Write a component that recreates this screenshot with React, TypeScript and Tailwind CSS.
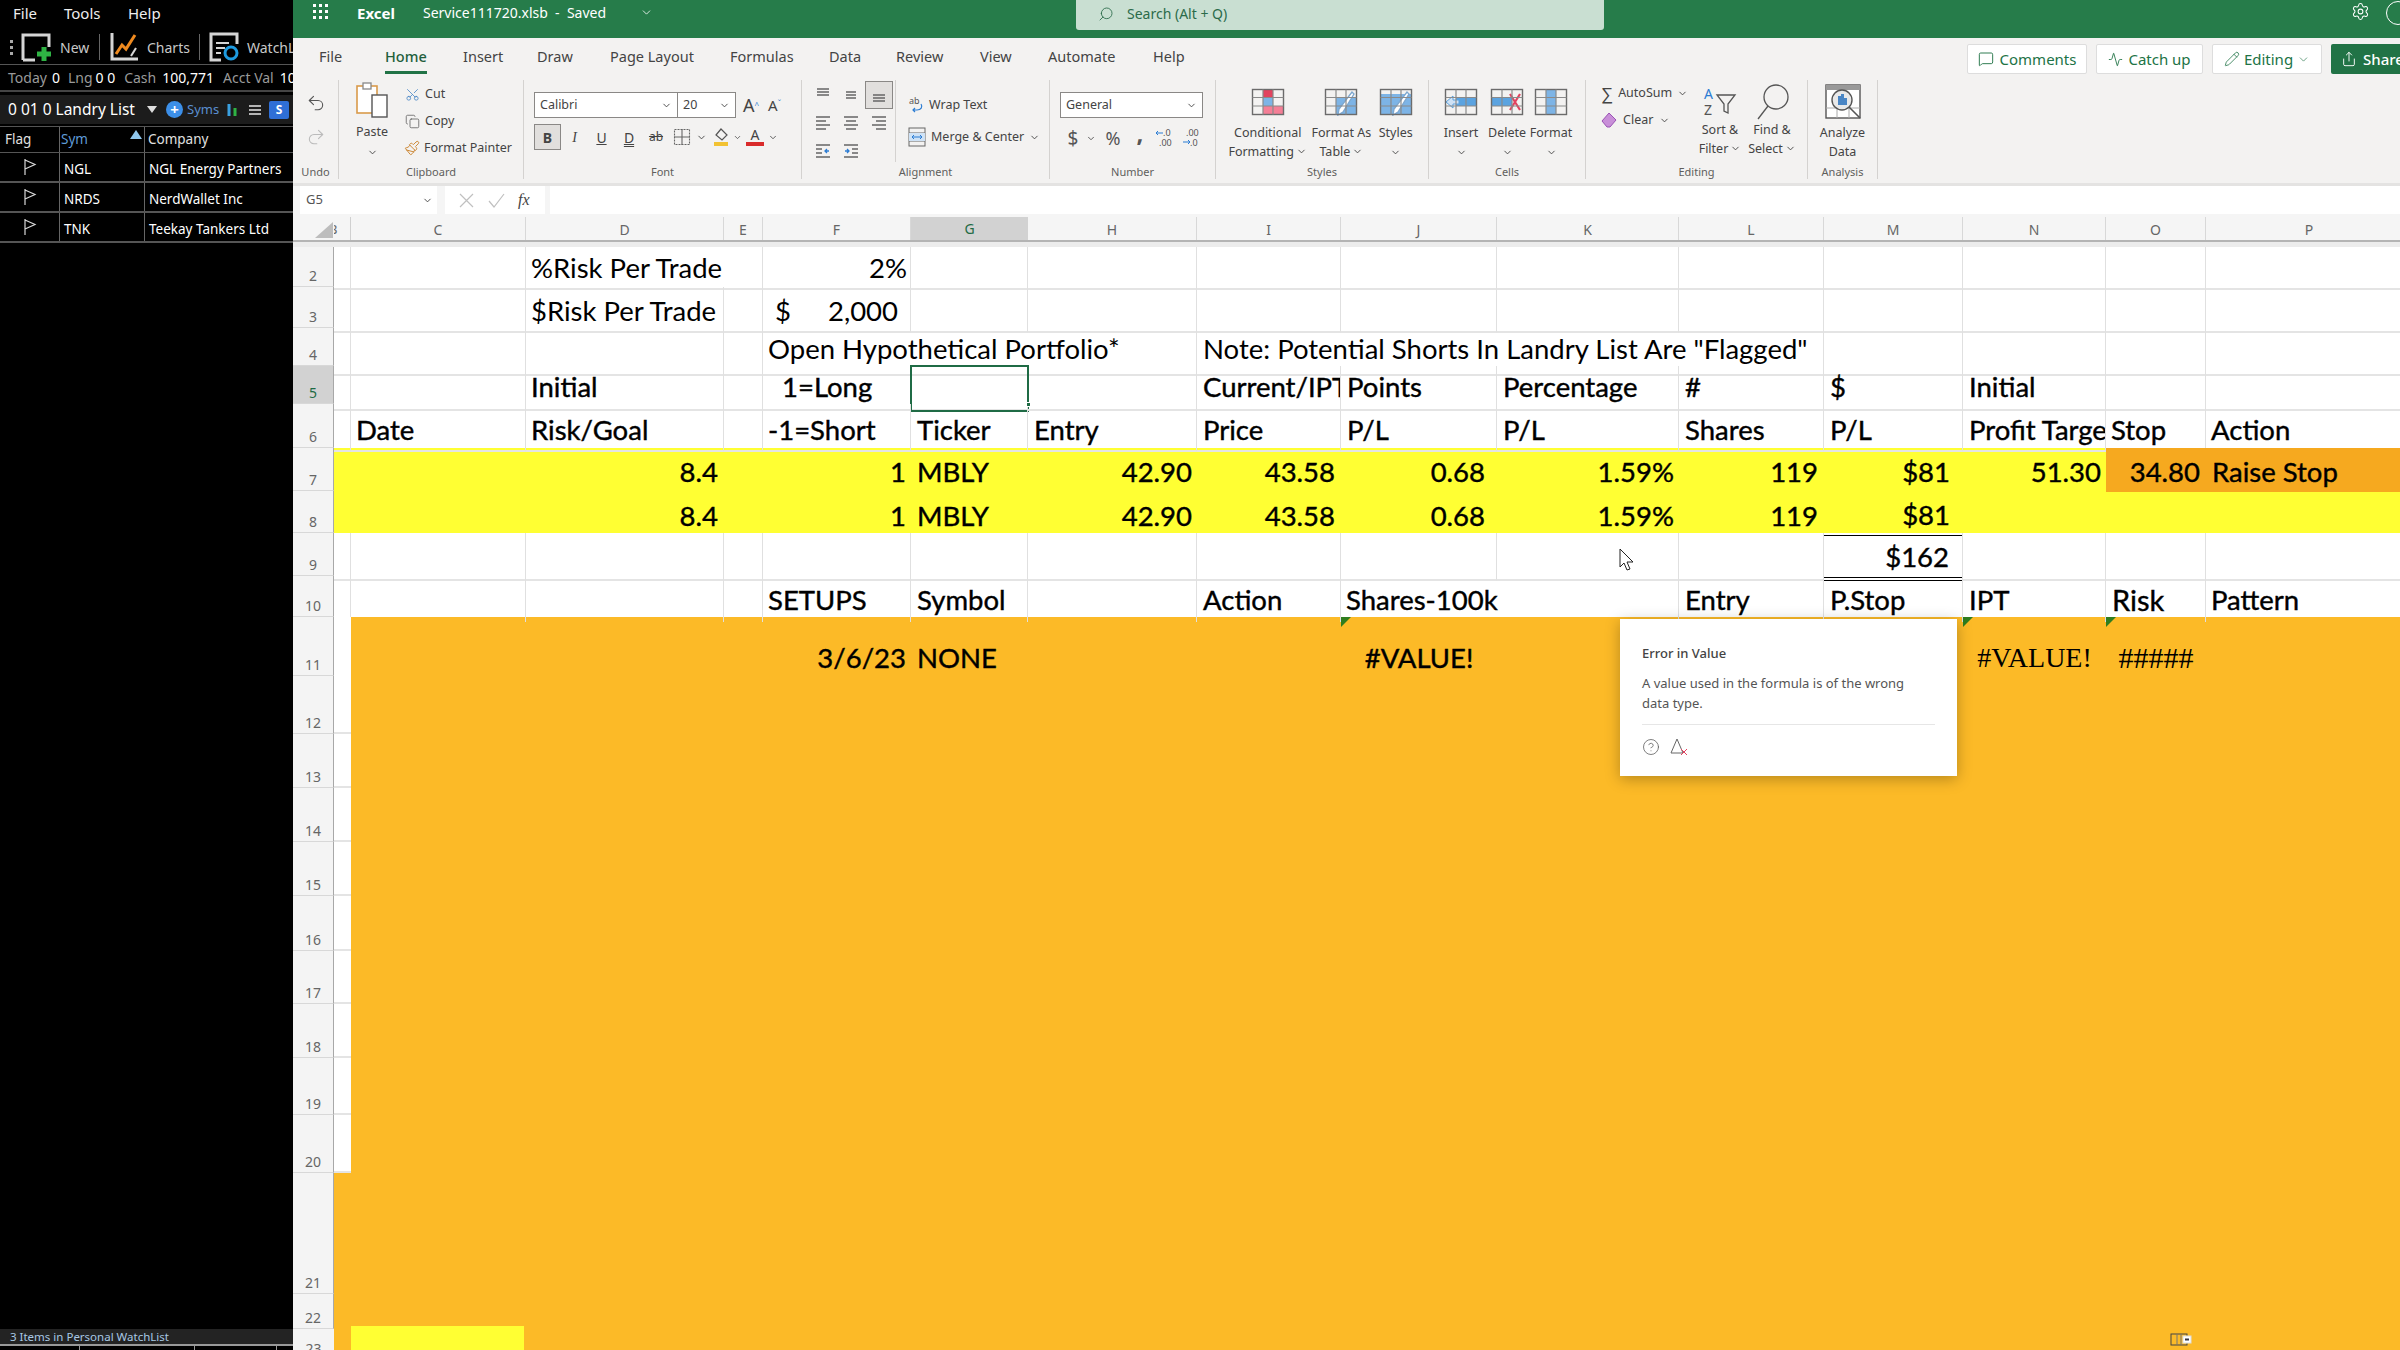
import { ReactNode } from "react";
import {
  Activity,
  ChevronDown,
  Copy,
  HelpCircle,
  MessageSquare,
  Paintbrush,
  Pencil,
  Redo2,
  Scissors,
  Search,
  Settings,
  Share,
  Undo2,
} from "lucide-react";

const GRID_COLS =
  "grid grid-cols-[17px_175px_198px_39px_148px_117px_169px_144px_156px_182px_145px_139px_143px_100px_207px]";

type Cell = {
  c: number;
  t?: ReactNode;
  cls?: string;
};

type RowDef = {
  n: number;
  h: string;
  pad?: string;
  fill?: string;
  plain?: boolean;
  whiteB?: boolean;
  cells?: Cell[];
};

const right = "justify-end pr-[6px]";
const stroke = "[-webkit-text-stroke:0.4px_black]";

const rows: RowDef[] = [
  {
    n: 2,
    h: "h-[40px]",
    pad: "pt-0",
    cells: [
      { c: 2, t: "%Risk Per Trade", cls: "col-span-2 pl-[5px]" },
      { c: 4, t: "2%", cls: "justify-end pr-[3px]" },
    ],
  },
  {
    n: 3,
    h: "h-[41px]",
    pad: "pt-[3px]",
    cells: [
      { c: 2, t: "$Risk Per Trade", cls: "pl-[5px]" },
      {
        c: 4,
        t: (
          <span className="flex w-full justify-between">
            <span>$</span>
            <span>2,000</span>
          </span>
        ),
        cls: "pl-[12px] pr-[12px]",
      },
    ],
  },
  {
    n: 4,
    h: "h-[38px]",
    pad: "pb-[5px]",
    cells: [
      { c: 4, t: "Open Hypothetical Portfolio*", cls: "col-span-3 pl-[5px]" },
      { c: 7, t: 'Note: Potential Shorts In Landry List Are "Flagged"', cls: "col-span-4 pl-[6px]" },
    ],
  },
  {
    n: 5,
    h: "h-[38px]",
    pad: "pb-[2px]",
    cells: [
      { c: 2, t: "Initial", cls: `pl-[5px] ${stroke}` },
      { c: 4, t: "1=Long", cls: `pl-[19px] ${stroke}` },
      { c: 5, cls: "outline-2 -outline-offset-1 outline-[#1f6b45]" },
      { c: 7, t: "Current/IPT", cls: `pl-[6px] overflow-hidden ${stroke}` },
      { c: 8, t: "Points", cls: `pl-[6px] ${stroke}` },
      { c: 9, t: "Percentage", cls: `pl-[6px] ${stroke}` },
      { c: 10, t: "#", cls: `pl-[6px] ${stroke}` },
      { c: 11, t: "$", cls: `pl-[6px] ${stroke}` },
      { c: 12, t: "Initial", cls: `pl-[6px] ${stroke}` },
    ],
  },
  {
    n: 6,
    h: "h-[44px]",
    pad: "pt-[5px]",
    cells: [
      { c: 1, t: "Date", cls: `pl-[5px] ${stroke}` },
      { c: 2, t: "Risk/Goal", cls: `pl-[5px] ${stroke}` },
      { c: 4, t: "-1=Short", cls: `pl-[5px] ${stroke}` },
      { c: 5, t: "Ticker", cls: `pl-[6px] ${stroke}` },
      { c: 6, t: "Entry", cls: `pl-[6px] ${stroke}` },
      { c: 7, t: "Price", cls: `pl-[6px] ${stroke}` },
      { c: 8, t: "P/L", cls: `pl-[6px] ${stroke}` },
      { c: 9, t: "P/L", cls: `pl-[6px] ${stroke}` },
      { c: 10, t: "Shares", cls: `pl-[6px] ${stroke}` },
      { c: 11, t: "P/L", cls: `pl-[6px] ${stroke}` },
      { c: 12, t: "Profit Target", cls: `pl-[6px] overflow-hidden ${stroke}` },
      { c: 13, t: "Stop", cls: `pl-[5px] ${stroke}` },
      { c: 14, t: "Action", cls: `pl-[5px] ${stroke}` },
    ],
  },
  {
    n: 7,
    h: "h-[43px]",
    pad: "pt-[3px]",
    plain: true,
    fill: "bg-[#ffff33]",
    cells: [
      { c: 2, t: "8.4", cls: `${right} ${stroke}` },
      { c: 4, t: "1", cls: `justify-end pr-[5px] ${stroke}` },
      { c: 5, t: "MBLY", cls: `pl-[6px] ${stroke}` },
      { c: 6, t: "42.90", cls: `justify-end pr-[5px] ${stroke}` },
      { c: 7, t: "43.58", cls: `${right} ${stroke}` },
      { c: 8, t: "0.68", cls: `justify-end pr-[12px] ${stroke}` },
      { c: 9, t: "1.59%", cls: `justify-end pr-[5px] ${stroke}` },
      { c: 10, t: "119", cls: `${right} ${stroke}` },
      { c: 11, t: "$81", cls: `justify-end pr-[13px] ${stroke}` },
      { c: 12, t: "51.30", cls: `justify-end pr-[5px] ${stroke}` },
      { c: 13, t: "34.80", cls: `bg-[#f6a91f] justify-end pr-[6px] ${stroke}` },
      { c: 14, t: "Raise Stop", cls: `bg-[#f6a91f] pl-[6px] ${stroke}` },
    ],
  },
  {
    n: 8,
    h: "h-[42px]",
    pad: "pt-[3px]",
    plain: true,
    fill: "bg-[#ffff33]",
    cells: [
      { c: 2, t: "8.4", cls: `${right} ${stroke}` },
      { c: 4, t: "1", cls: `justify-end pr-[5px] ${stroke}` },
      { c: 5, t: "MBLY", cls: `pl-[6px] ${stroke}` },
      { c: 6, t: "42.90", cls: `justify-end pr-[5px] ${stroke}` },
      { c: 7, t: "43.58", cls: `${right} ${stroke}` },
      { c: 8, t: "0.68", cls: `justify-end pr-[12px] ${stroke}` },
      { c: 9, t: "1.59%", cls: `justify-end pr-[5px] ${stroke}` },
      { c: 10, t: "119", cls: `${right} ${stroke}` },
      { c: 11, t: "$81", cls: `justify-end pr-[13px] border-b border-black ${stroke}` },
    ],
  },
  {
    n: 9,
    h: "h-[43px]",
    pad: "pt-[3px]",
    cells: [
      { c: 11, t: "$162", cls: `justify-end pr-[13px] !border-b-4 border-double !border-b-black ${stroke}` },
    ],
  },
  {
    n: 10,
    h: "h-[41px]",
    pad: "pt-[2px]",
    cells: [
      { c: 4, t: "SETUPS", cls: `pl-[5px] ${stroke}` },
      { c: 5, t: "Symbol", cls: `pl-[6px] ${stroke}` },
      { c: 7, t: "Action", cls: `pl-[6px] ${stroke}` },
      { c: 8, t: "Shares-100k", cls: `col-span-2 pl-[5px] ${stroke}` },
      { c: 10, t: "Entry", cls: `pl-[6px] ${stroke}` },
      { c: 11, t: "P.Stop", cls: `pl-[6px] ${stroke}` },
      { c: 12, t: "IPT", cls: `pl-[6px] ${stroke}` },
      { c: 13, t: "Risk", cls: `pl-[6px] text-[29px] ${stroke}` },
      { c: 14, t: "Pattern", cls: `pl-[5px] ${stroke}` },
    ],
  },
  {
    n: 11,
    h: "h-[59px]",
    pad: "pt-[18px]",
    plain: true,
    whiteB: true,
    cells: [
      { c: 4, t: "3/6/23", cls: `justify-end pr-[5px] ${stroke}` },
      { c: 5, t: "NONE", cls: `pl-[6px] ${stroke}` },
      { c: 8, t: "#VALUE!", cls: `justify-center ${stroke}` },
      { c: 12, t: "#VALUE!", cls: "justify-center font-['Liberation_Serif',serif] text-[28px]" },
      { c: 13, t: "#####", cls: "justify-center font-['Liberation_Serif',serif] text-[30px]" },
    ],
  },
  { n: 12, h: "h-[58px]", plain: true, whiteB: true },
  { n: 13, h: "h-[54px]", plain: true, whiteB: true },
  { n: 14, h: "h-[54px]", plain: true, whiteB: true },
  { n: 15, h: "h-[54px]", plain: true, whiteB: true },
  { n: 16, h: "h-[55px]", plain: true, whiteB: true },
  { n: 17, h: "h-[53px]", plain: true, whiteB: true },
  { n: 18, h: "h-[54px]", plain: true, whiteB: true },
  { n: 19, h: "h-[57px]", plain: true, whiteB: true },
  { n: 20, h: "h-[58px]", plain: true, whiteB: true },
  { n: 21, h: "h-[121px]", plain: true },
  { n: 22, h: "h-[35px]", plain: true },
];

function SheetRow({ row }: { row: RowDef }) {
  const cells = row.cells ?? [];
  const isOrange = row.n >= 11;
  const out: ReactNode[] = [];
  let skip = 0;
  for (let c = 0; c < 15; c++) {
    if (skip > 0) {
      skip--;
      continue;
    }
    const cell = cells.find((x) => x.c === c);
    const cls = cell?.cls ?? "";
    if (cls.includes("col-span-2")) skip = 1;
    if (cls.includes("col-span-3")) skip = 2;
    if (cls.includes("col-span-4")) skip = 3;
    let lines = "";
    if (row.n === 10) lines = "border-r border-r-[#e0e0e0]";
    else if (!row.plain) lines = "border-r border-b-2 border-r-[#e0e0e0] border-b-[#e4e4e4]";
    const whiteB = c === 0 && row.whiteB ? "bg-white border-b-2 border-b-[#e4e4e4]" : "";
    const corner = row.n === 11 && (c === 8 || c === 12 || c === 13);
    out.push(
      <div
        key={c}
        className={`relative flex items-center whitespace-nowrap min-w-0 ${row.pad ?? ""} ${lines} ${whiteB} ${cls}`}
      >
        {corner && (
          <svg className="absolute left-0 top-0" width="10" height="10" viewBox="0 0 10 10">
            <polygon points="0,0 10,0 0,10" fill="#2e7d1f" />
          </svg>
        )}
        {cell?.t}
      </div>
    );
  }
  return (
    <div className={`flex shrink-0 ${row.h}`}>
      <div
        className={`w-[41px] shrink-0 flex items-end justify-center border-b border-r border-b-[#d8d8d8] border-r-[#a8a8a8] text-[14px] font-['Noto_Sans',sans-serif] ${
          row.n === 5 ? "bg-[#d2d2d2] text-[#1f6b45]" : "bg-[#f4f4f4] text-[#666]"
        }`}
      >
        {row.n}
      </div>
      <div className={`flex-1 text-[27.5px] text-black ${GRID_COLS} ${row.fill ?? (isOrange ? "bg-[#fcba27]" : "bg-white")}`}>
        {out}
      </div>
    </div>
  );
}

function ColHeader() {
  const names = ["C", "D", "E", "F", "G", "H", "I", "J", "K", "L", "M", "N", "O", "P"];
  return (
    <div className="flex h-[25px] shrink-0 overflow-hidden border-b-2 border-[#b4b4b4] bg-[#f5f5f5] text-[14px] text-[#666]">
      <div className="w-[41px] shrink-0 flex items-end justify-end pb-[2px] pr-[1px]">
        <svg width="18" height="16" viewBox="0 0 18 16">
          <polygon points="18,0 18,16 0,16" fill="#bdbdbd" />
        </svg>
      </div>
      <div className={`flex-1 ${GRID_COLS}`}>
        <div className="flex items-center overflow-hidden border-r border-[#d0d0d0] pl-[1px] text-[13px]">
          <span className="-ml-[6px]">B</span>
        </div>
        {names.map((n) =>
          n === "G" ? (
            <div key={n} className="flex items-center justify-center bg-[#d2d2d2] text-[#1f6b45] border-b-2 border-[#1f6b45] h-[25px]">
              {n}
            </div>
          ) : (
            <div key={n} className="flex items-center justify-center border-r border-[#d8d8d8]">
              {n}
            </div>
          )
        )}
      </div>
    </div>
  );
}

function Waffle() {
  const dots = [0, 1, 2, 3, 4, 5, 6, 7, 8];
  return (
    <div className="grid grid-cols-3 gap-[3px] w-[15px]">
      {dots.map((d) => (
        <span key={d} className="size-[3px] bg-white" />
      ))}
    </div>
  );
}

function FlagIcon() {
  return (
    <svg width="14" height="18" viewBox="0 0 14 18" fill="none" stroke="#d8d8d8" strokeWidth="1.2">
      <path d="M2 1v16M2 2l10 4.5L2 11" />
    </svg>
  );
}

function LeftPanel() {
  const items = [
    ["NGL", "NGL Energy Partners"],
    ["NRDS", "NerdWallet Inc"],
    ["TNK", "Teekay Tankers Ltd"],
  ];
  return (
    <div className="w-[293px] shrink-0 h-full bg-black flex flex-col font-['Noto_Sans',sans-serif] text-[#e0e0e0] overflow-hidden relative">
      <div className="h-[30px] flex items-start pt-[2px] pl-[13px] text-[15px] text-[#eeeeee]">
        <span className="w-[51px]">File</span>
        <span className="w-[64px]">Tools</span>
        <span>Help</span>
      </div>
      <div className="h-[35px] flex items-center border-b border-[#555] text-[14px] text-[#c8c8c8] whitespace-nowrap">
        <div className="w-[21px] shrink-0 flex flex-col items-center gap-[3px] pl-[1px]">
          <span className="size-[3px] bg-[#aaa]" />
          <span className="size-[3px] bg-[#aaa]" />
          <span className="size-[3px] bg-[#aaa]" />
        </div>
        <svg className="shrink-0" width="32" height="30" viewBox="0 0 32 30" fill="none">
          <path d="M2 28V3h26v12" stroke="#d5d5d5" strokeWidth="3" />
          <path d="M2 28h12" stroke="#d5d5d5" strokeWidth="3" />
          <path d="M23 15v14M16 22h14" stroke="#2fb344" strokeWidth="5" />
        </svg>
        <span className="ml-[7px] w-[39px] shrink-0">New</span>
        <span className="w-px h-[26px] bg-[#666] shrink-0" />
        <svg className="ml-[9px] shrink-0" width="32" height="30" viewBox="0 0 32 30" fill="none">
          <path d="M3 1v26h26" stroke="#d5d5d5" strokeWidth="3" />
          <path d="M7 22l6-9 4 4 9-14" stroke="#ef8a1f" strokeWidth="3" />
          <path d="M22 24l5-8" stroke="#d5d5d5" strokeWidth="2" />
        </svg>
        <span className="ml-[6px] w-[52px] shrink-0">Charts</span>
        <span className="w-px h-[26px] bg-[#666] shrink-0" />
        <svg className="ml-[9px] shrink-0" width="32" height="30" viewBox="0 0 32 30" fill="none">
          <path d="M12 28H2V2h26v10" stroke="#d5d5d5" strokeWidth="3" />
          <path d="M7 11h13M7 16h9M7 21h5" stroke="#d5d5d5" strokeWidth="2" />
          <circle cx="22" cy="21" r="6" stroke="#1e9be0" strokeWidth="3" />
        </svg>
        <span className="ml-[6px] shrink-0">WatchList</span>
      </div>
      <div className="h-[27px] flex items-center pl-[8px] whitespace-nowrap text-[14px] border-b-2 border-[#444] text-[#9a9a9a]">
        <span>Today</span>
        <span className="ml-[5px] text-white">0</span>
        <span className="ml-[8px]">Lng</span>
        <span className="ml-[3px] text-white">0 0</span>
        <span className="ml-[9px]">Cash</span>
        <span className="ml-[6px] text-white">100,771</span>
        <span className="ml-[9px]">Acct Val</span>
        <span className="ml-[6px] text-white">100,771</span>
      </div>
      <div className="mt-[3px] h-[29px] flex items-center pl-[8px] bg-[#1c1c1c] whitespace-nowrap">
        <span className="text-[15.5px] text-white w-[139px] shrink-0">0 01 0 Landry List</span>
        <svg width="10" height="7" viewBox="0 0 10 7" className="shrink-0">
          <polygon points="0,0 10,0 5,7" fill="#ddd" />
        </svg>
        <span className="ml-[9px] flex size-[17px] shrink-0 items-center justify-center rounded-full bg-[#3c8fe8] text-[15px] leading-none font-bold text-white">+</span>
        <span className="ml-[4px] text-[13px] text-[#5a8fd0]">Syms</span>
        <svg className="ml-[7px] shrink-0" width="12" height="16" viewBox="0 0 12 16">
          <path d="M3 2v12" stroke="#3aa0e0" strokeWidth="3" />
          <path d="M9 6v8" stroke="#2fb344" strokeWidth="3" />
        </svg>
        <svg className="ml-[10px] shrink-0" width="14" height="14" viewBox="0 0 14 14" stroke="#b5b5b5" strokeWidth="2">
          <path d="M1 3h12M1 7h12M1 11h12" />
        </svg>
        <span className="ml-[7px] flex h-[18px] w-[20px] shrink-0 items-center justify-center rounded-[2px] bg-[#2f6fd6] text-[12px] font-bold text-white">S</span>
      </div>
      <div className="mt-[2px] h-[27px] flex items-center border-y border-[#555] text-[13.5px] relative">
        <span className="w-[60px] pl-[5px] border-r border-[#666] h-full flex items-center">Flag</span>
        <span className="w-[85px] pl-[1px] border-r border-[#666] h-full flex items-center text-[#5f9bd8] relative">
          Sym
          <svg className="absolute right-[2px] top-[3px]" width="12" height="9" viewBox="0 0 12 9">
            <polygon points="6,0 12,9 0,9" fill="#8fc7ee" />
          </svg>
        </span>
        <span className="pl-[3px]">Company</span>
      </div>
      {items.map((it) => (
        <div key={it[0]} className="h-[30px] flex items-center border-b-2 border-[#555] text-[13.5px] text-white">
          <span className="w-[60px] h-full flex items-center justify-center border-r border-[#666]">
            <FlagIcon />
          </span>
          <span className="w-[85px] h-full flex items-center pl-[4px] pt-[5px] border-r border-[#666]">{it[0]}</span>
          <span className="pl-[4px] pt-[5px] whitespace-nowrap">{it[1]}</span>
        </div>
      ))}
      <div className="flex-1" />
      <div className="h-[15px] bg-[#232323] pl-[10px] flex items-center text-[11.5px] text-[#a8c8e4]">
        3 Items in Personal WatchList
      </div>
      <div className="h-[6px] flex border-t-2 border-[#999]">
        <span className="w-[80px] border-r border-[#999]" />
        <span className="w-[115px] border-r border-[#999]" />
        <span className="w-[82px] border-r border-[#999]" />
      </div>
    </div>
  );
}

function TopBar() {
  return (
    <div className="h-[38px] shrink-0 bg-[#267c4a] flex items-start text-white text-[14px] whitespace-nowrap">
      <div className="w-[64px] shrink-0 pl-[20px] pt-[4px]">
        <Waffle />
      </div>
      <span className="pt-[2px] w-[66px] shrink-0 font-bold text-[15px]">Excel</span>
      <span className="pt-[2px] w-[217px] shrink-0">Service111720.xlsb&nbsp;&nbsp;-&nbsp;&nbsp;Saved</span>
      <ChevronDown className="mt-[6px] shrink-0" size={13} strokeWidth={1.5} />
      <div className="ml-[423px] h-[30px] w-[528px] shrink-0 bg-[#c9dfd2] rounded-b-[3px] flex items-center pl-[22px] pb-[3px] text-[#2b6b4a]">
        <Search size={16} strokeWidth={1.3} className="-scale-x-100" />
        <span className="ml-[13px]">Search (Alt + Q)</span>
      </div>
      <Settings className="ml-[747px] mt-[2px] shrink-0" size={19} strokeWidth={1.3} />
      <span className="ml-[16px] mt-[1px] size-[24px] shrink-0 rounded-full border border-white" />
    </div>
  );
}

function Tabs() {
  return (
    <div className="h-[42px] shrink-0 bg-[#f3f2f1] flex items-start pl-[26px] pt-[8px] text-[14.5px] text-[#444] whitespace-nowrap">
      <span className="w-[66px]">File</span>
      <span className="w-[78px] text-[#1f5f3c]">
        <span className="inline-block border-b-[3px] border-[#217346] pb-[3px] font-medium">Home</span>
      </span>
      <span className="w-[74px]">Insert</span>
      <span className="w-[73px]">Draw</span>
      <span className="w-[120px]">Page Layout</span>
      <span className="w-[99px]">Formulas</span>
      <span className="w-[67px]">Data</span>
      <span className="w-[84px]">Review</span>
      <span className="w-[68px]">View</span>
      <span className="w-[105px]">Automate</span>
      <span>Help</span>
      <div className="ml-auto -mt-[2px] flex gap-[9px] text-[#217346] text-[15px]">
        <span className="h-[30px] w-[120px] flex items-center justify-center gap-[6px] bg-white border border-[#dddddd] rounded-[2px]">
          <MessageSquare size={16} strokeWidth={1.4} />
          Comments
        </span>
        <span className="h-[30px] w-[107px] flex items-center justify-center gap-[5px] bg-white border border-[#dddddd] rounded-[2px]">
          <Activity size={15} strokeWidth={1.4} />
          Catch up
        </span>
        <span className="h-[30px] w-[110px] flex items-center justify-center gap-[4px] bg-white border border-[#dddddd] rounded-[2px]">
          <Pencil size={16} strokeWidth={1.2} />
          Editing
          <ChevronDown size={13} strokeWidth={1.2} />
        </span>
        <span className="h-[30px] w-[69px] flex items-center pl-[10px] gap-[6px] bg-[#217346] text-white rounded-l-[2px] font-medium overflow-hidden whitespace-nowrap">
          <Share size={16} strokeWidth={1.4} className="shrink-0" />
          Share
        </span>
      </div>
    </div>
  );
}

function Group({ w, label, children }: { w: string; label: string; children: ReactNode }) {
  return (
    <div className={`${w} shrink-0 h-[99px] flex flex-col border-r border-[#d4d2d0]`}>
      <div className="h-[85px] flex">{children}</div>
      <div className="h-[14px] flex items-center justify-center text-[11px] text-[#605e5c]">{label}</div>
    </div>
  );
}

function Chev({ cls = "" }: { cls?: string }) {
  return <ChevronDown className={cls} size={11} strokeWidth={2} color="#444" />;
}

function Lines({ v }: { v: number }) {
  // alignment glyphs: 0-2 vertical top/mid/bottom, 3-5 left/center/right, 6-7 indent
  const sets: string[] = [
    "M3 3h12M3 6h12M3 9h12",
    "M4 6h10M4 9h10M4 12h10",
    "M3 9h12M3 12h12M3 15h12",
    "M2 3h14M2 7h10M2 11h14M2 15h10",
    "M2 3h14M4 7h10M2 11h14M4 15h10",
    "M2 3h14M6 7h10M2 11h14M6 15h10",
    "M2 3h14M2 7h6M2 11h6M2 15h14",
    "M2 3h14M10 7h6M10 11h6M2 15h14",
  ];
  return (
    <svg width="18" height="18" viewBox="0 0 18 18" fill="none" stroke="#666" strokeWidth="1.3">
      <path d={sets[v]} />
      {v === 6 && <path d="M15 9h-4M13 7l-2 2 2 2" stroke="#2b7cd3" />}
      {v === 7 && <path d="M3 9h4M5 7l2 2-2 2" stroke="#2b7cd3" />}
    </svg>
  );
}

function TableGlyph({ children }: { children?: ReactNode }) {
  return (
    <svg width="34" height="28" viewBox="0 0 34 28" fill="none">
      {children}
      <rect x="1.5" y="1.5" width="31" height="25" stroke="#6b6b6b" strokeWidth="1.4" />
      <path d="M12 1.5v25M22 1.5v25M1.5 9.5h31M1.5 18h31" stroke="#8a8a8a" strokeWidth="1.2" />
    </svg>
  );
}

function Brush() {
  return <path d="M30 6L19 24l-5 3 1-6L28 4z" fill="#fff" stroke="#7da7cf" strokeWidth="1.4" />;
}

function ColumnBtn({
  icon,
  a,
  b,
  w,
  noChev,
  bChev,
  tight,
}: {
  icon: ReactNode;
  a: string;
  b?: string;
  w: string;
  noChev?: boolean;
  bChev?: boolean;
  tight?: boolean;
}) {
  return (
    <div className={`${w} flex flex-col items-center pt-[8px] text-[12.5px] leading-[19px] text-[#444] whitespace-nowrap`}>
      <div className="h-[28px] flex items-center">{icon}</div>
      <span className={tight ? "mt-[4px]" : "mt-[7px]"}>{a}</span>
      {b ? (
        <span className="flex items-center gap-[2px]">
          {b}
          {bChev && <Chev />}
        </span>
      ) : (
        !noChev && <Chev cls="mt-[5px]" />
      )}
    </div>
  );
}

function Ribbon() {
  return (
    <div className="h-[103px] shrink-0 bg-[#f3f2f1] flex text-[12.5px] text-[#444] font-['Noto_Sans',sans-serif]">
      <Group w="w-[46px]" label="Undo">
        <div className="w-full flex flex-col items-center pt-[13px] gap-[14px]">
          <Undo2 size={20} strokeWidth={1.3} color="#555" />
          <Redo2 size={20} strokeWidth={1.3} color="#bbb" />
        </div>
      </Group>
      <Group w="w-[185px]" label="Clipboard">
        <div className="w-[66px] flex flex-col items-center pt-[2px]">
          <svg width="34" height="36" viewBox="0 0 34 36" fill="none">
            <rect x="2" y="4" width="20" height="27" fill="#fff" stroke="#d99a4a" strokeWidth="1.6" />
            <rect x="8" y="1" width="8" height="6" fill="#fff" stroke="#888" strokeWidth="1.3" />
            <rect x="17" y="13" width="15" height="22" fill="#fff" stroke="#555" strokeWidth="1.4" />
          </svg>
          <span className="mt-[5px]">Paste</span>
          <Chev cls="mt-[5px]" />
        </div>
        <div className="flex flex-col pt-[4px] gap-[7px]">
          <div className="h-[20px] flex items-center gap-[5px]">
            <Scissors size={15} strokeWidth={1.3} color="#4a86c5" className="-rotate-90" />
            Cut
          </div>
          <div className="h-[20px] flex items-center gap-[5px]">
            <Copy size={15} strokeWidth={1.2} color="#555" />
            Copy
          </div>
          <div className="h-[20px] flex items-center gap-[4px] -ml-[1px] whitespace-nowrap">
            <Paintbrush size={16} strokeWidth={1.4} color="#c9822c" />
            Format Painter
          </div>
        </div>
      </Group>
      <Group w="w-[278px]" label="Font">
        <div className="pl-[10px] pt-[12px] flex flex-col gap-[6px] w-full">
          <div className="flex items-center h-[26px]">
            <div className="w-[144px] h-full bg-white border border-[#8a8886] flex items-center justify-between px-[5px]">
              Calibri
              <Chev />
            </div>
            <div className="w-[58px] h-full bg-white border border-l-0 border-[#8a8886] flex items-center justify-between px-[5px]">
              20
              <Chev />
            </div>
            <span className="ml-[7px] text-[18px] leading-none">A<sup className="text-[8px] text-[#2b7cd3]">^</sup></span>
            <span className="ml-[9px] text-[15px] leading-none">A<sup className="text-[8px] text-[#2b7cd3]">ˇ</sup></span>
          </div>
          <div className="flex items-center h-[26px] text-[14px]">
            <span className="w-[27px] h-full bg-[#e1dfdd] border border-[#8a8886] flex items-center justify-center font-bold">B</span>
            <span className="w-[27px] text-center italic font-['Liberation_Serif',serif]">I</span>
            <span className="w-[27px] text-center underline">U</span>
            <span className="w-[28px] text-center underline decoration-double">D</span>
            <span className="w-[26px] text-center line-through text-[12px]">ab</span>
            <span className="w-[26px] flex justify-center">
              <svg width="18" height="18" viewBox="0 0 18 18" fill="none" stroke="#666" strokeWidth="1.1">
                <rect x="1.5" y="1.5" width="15" height="15" strokeDasharray="2 1" />
                <path d="M9 1v16M1 9h16" />
              </svg>
            </span>
            <span className="w-[13px] flex justify-center"><Chev /></span>
            <span className="w-[25px] flex justify-center">
              <svg width="18" height="20" viewBox="0 0 18 20" fill="none">
                <path d="M9 2l6 6-5 5-6-5z" stroke="#555" strokeWidth="1.2" />
                <rect x="2" y="15" width="14" height="4" fill="#f2c232" />
              </svg>
            </span>
            <span className="w-[9px] flex justify-center"><Chev /></span>
            <span className="w-[26px] flex flex-col items-center leading-[14px]">
              A
              <span className="h-[4px] w-[18px] bg-[#d92b2b]" />
            </span>
            <span className="w-[10px] flex justify-center"><Chev /></span>
          </div>
        </div>
      </Group>
      <Group w="w-[248px]" label="Alignment">
        <div className="w-[94px] pl-[7px] pt-[1px] grid grid-cols-[28px_28px_28px] grid-rows-[28px_28px_28px] border-r border-[#d4d2d0] h-[82px]">
          {[0, 1, 2, 3, 4, 5, 6, 7].map((v) => (
            <div
              key={v}
              className={`flex items-center justify-center ${v === 2 ? "bg-[#e1dfdd] border border-[#8a8886]" : ""}`}
            >
              <Lines v={v} />
            </div>
          ))}
        </div>
        <div className="pl-[12px] pt-[15px] flex flex-col gap-[12px] whitespace-nowrap">
          <div className="h-[20px] flex items-center gap-[5px]">
            <svg width="16" height="18" viewBox="0 0 16 18" fill="none">
              <text x="1" y="8" fontSize="9" fill="#555">ab</text>
              <path d="M13 8c2 3 0 6-4 6H5m2-2l-2 2 2 2" stroke="#2b7cd3" strokeWidth="1.2" />
            </svg>
            Wrap Text
          </div>
          <div className="h-[20px] flex items-center gap-[5px]">
            <svg width="18" height="20" viewBox="0 0 18 20" fill="none">
              <rect x="1" y="1" width="16" height="18" stroke="#666" />
              <path d="M1 6h16M1 14h16" stroke="#666" />
              <rect x="1" y="6" width="16" height="8" fill="#cfe2f5" />
              <path d="M4 10h10M6 8l-2 2 2 2M12 8l2 2-2 2" stroke="#2b7cd3" />
            </svg>
            Merge &amp; Center
            <Chev />
          </div>
        </div>
      </Group>
      <Group w="w-[166px]" label="Number">
        <div className="pl-[10px] pt-[12px] flex flex-col gap-[3px] w-full">
          <div className="w-[143px] h-[26px] bg-white border border-[#8a8886] flex items-center justify-between px-[5px]">
            General
            <Chev />
          </div>
          <div className="flex items-center h-[34px] text-[#555]">
            <span className="w-[26px] text-center text-[19px]">$</span>
            <span className="w-[10px] flex justify-center"><Chev /></span>
            <span className="w-[34px] text-center text-[18px]">%</span>
            <span className="w-[20px] text-center text-[24px] font-bold leading-none -mt-[10px]">,</span>
            <span className="w-[29px] flex justify-center">
              <svg width="20" height="20" viewBox="0 0 20 20">
                <text x="8" y="8" fontSize="9" fill="#555">.0</text>
                <text x="4" y="18" fontSize="9" fill="#555">.00</text>
                <path d="M8 5H1m2-2L1 5l2 2" stroke="#2b7cd3" fill="none" />
              </svg>
            </span>
            <span className="w-[26px] flex justify-center">
              <svg width="20" height="20" viewBox="0 0 20 20">
                <text x="4" y="8" fontSize="9" fill="#555">.00</text>
                <text x="8" y="18" fontSize="9" fill="#555">.0</text>
                <path d="M1 14h7m-2-2l2 2-2 2" stroke="#2b7cd3" fill="none" />
              </svg>
            </span>
          </div>
        </div>
      </Group>
      <Group w="w-[213px]" label="Styles">
        <ColumnBtn
          w="w-[104px]"
          a="Conditional"
          b="Formatting"
          bChev
          icon={
            <TableGlyph>
              <rect x="12" y="2" width="10" height="8" fill="#e2435f" />
              <rect x="12" y="10" width="10" height="8" fill="#7db4e6" />
              <rect x="12" y="18" width="20" height="8" fill="#f47f96" />
            </TableGlyph>
          }
        />
        <ColumnBtn
          w="w-[44px]"
          a="Format As"
          b="Table"
          bChev
          icon={
            <TableGlyph>
              <rect x="12" y="10" width="20" height="16" fill="#7db4e6" />
              <Brush />
            </TableGlyph>
          }
        />
        <ColumnBtn
          w="w-[65px]"
          a="Styles"
          icon={
            <TableGlyph>
              <rect x="2" y="6" width="30" height="20" fill="#7db4e6" />
              <Brush />
            </TableGlyph>
          }
        />
      </Group>
      <Group w="w-[157px]" label="Cells">
        <ColumnBtn
          w="w-[64px]"
          a="Insert"
          icon={
            <TableGlyph>
              <rect x="12" y="10" width="20" height="8" fill="#5ba3e0" />
              <path d="M2 14l7-6v4h6v4H9v4z" fill="#cfe2f5" stroke="#5ba3e0" />
            </TableGlyph>
          }
        />
        <ColumnBtn
          w="w-[28px]"
          a="Delete"
          icon={
            <TableGlyph>
              <rect x="2" y="10" width="20" height="8" fill="#5ba3e0" />
              <path d="M20 6l10 16M30 6L20 22" stroke="#e2435f" strokeWidth="2.2" />
            </TableGlyph>
          }
        />
        <ColumnBtn
          w="w-[60px]"
          a="Format"
          icon={
            <TableGlyph>
              <rect x="12" y="2" width="10" height="24" fill="#7db4e6" />
            </TableGlyph>
          }
        />
      </Group>
      <Group w="w-[222px]" label="Editing">
        <div className="w-[112px] pl-[15px] pt-[3px] flex flex-col gap-[7px] whitespace-nowrap">
          <div className="h-[20px] flex items-center gap-[5px]">
            <span className="text-[17px] leading-none">∑</span>
            AutoSum
            <Chev />
          </div>
          <div className="h-[20px] flex items-center gap-[6px]">
            <svg width="16" height="16" viewBox="0 0 16 16">
              <path d="M8 1l7 7-6 7H6L1 9z" fill="#c88fd8" stroke="#9a52b5" />
            </svg>
            Clear
            <Chev />
          </div>
        </div>
        <ColumnBtn
          w="w-[44px]"
          a="Sort &"
          b="Filter"
          bChev
          tight
          icon={
            <svg width="36" height="34" viewBox="0 0 36 34" fill="none">
              <text x="2" y="14" fontSize="14" fill="#2b7cd3">A</text>
              <text x="2" y="30" fontSize="14" fill="#555">Z</text>
              <path d="M15 10h18l-7 9v9l-4-2v-7z" stroke="#555" strokeWidth="1.3" />
            </svg>
          }
        />
        <ColumnBtn
          w="w-[60px]"
          a="Find &"
          b="Select"
          bChev
          tight
          icon={
            <svg width="34" height="36" viewBox="0 0 34 36" fill="none" stroke="#555" strokeWidth="1.3">
              <circle cx="21" cy="13" r="12" />
              <path d="M13 22L3 35" />
            </svg>
          }
        />
      </Group>
      <Group w="w-[70px]" label="Analysis">
        <ColumnBtn
          w="w-full"
          a="Analyze"
          b="Data"
          icon={
            <svg width="38" height="36" viewBox="0 0 38 36" fill="none">
              <rect x="2" y="1" width="34" height="33" stroke="#555" strokeWidth="1.4" fill="#fff" />
              <rect x="2" y="1" width="34" height="5" fill="#999" />
              <path d="M2 24h34M13 24v10M25 24v10" stroke="#aaa" />
              <circle cx="18" cy="16" r="10" fill="#e9e9e9" stroke="#555" strokeWidth="1.4" />
              <path d="M14 12v9h3v-9zM17 10v11h3V10zM20 14v7h3v-7z" fill="#4a86c5" />
              <path d="M25 23l11 11" stroke="#555" strokeWidth="1.6" />
            </svg>
          }
        />
      </Group>
    </div>
  );
}

function FormulaBar() {
  return (
    <div className="h-[34px] shrink-0 border-t-[3px] border-[#e4e3e2] bg-[#f5f5f5] flex items-start text-[13px] text-[#555] font-['Noto_Sans',sans-serif]">
      <div className="ml-[7px] w-[137px] h-[28px] bg-white flex items-center justify-between pl-[6px] pr-[4px]">
        G5
        <Chev />
      </div>
      <div className="ml-[8px] w-[100px] h-[28px] bg-white flex items-center pl-[13px] gap-[13px] text-[#bbb]">
        <svg width="17" height="17" viewBox="0 0 17 17" stroke="#c0c0c0" fill="none" strokeWidth="1.2">
          <path d="M2 2l13 13M15 2L2 15" />
        </svg>
        <svg width="17" height="17" viewBox="0 0 17 17" stroke="#c0c0c0" fill="none" strokeWidth="1.2">
          <path d="M1 9l5 6L16 2" />
        </svg>
        <span className="font-['Liberation_Serif',serif] italic text-[16px] text-[#444]">fx</span>
      </div>
      <div className="ml-[5px] flex-1 h-[28px] bg-white" />
    </div>
  );
}

export default function App() {
  return (
    <div className="relative flex h-[1350px] w-[2400px] overflow-hidden bg-black">
      <LeftPanel />
      <div className="flex-1 flex flex-col font-['Noto_Sans',sans-serif] min-w-0">
        <TopBar />
        <Tabs />
        <Ribbon />
        <FormulaBar />
        <ColHeader />
        <div className="h-[5px] shrink-0 bg-[#ececec]" />
        <div className="flex-1 min-h-0 overflow-hidden flex flex-col font-['Lato',sans-serif] bg-[#fcba27]">
          {rows.map((r) => (
            <SheetRow key={r.n} row={r} />
          ))}
          <div className="flex shrink-0 h-[40px]">
            <div className="w-[41px] bg-[#f4f4f4] flex items-start justify-center pt-[9px] text-[14px] text-[#666] font-['Noto_Sans',sans-serif]">23</div>
            <div className="w-[17px]" />
            <div className="w-[173px] bg-[#ffff33] -mt-[3px]" />
          </div>
        </div>
      </div>

      {/* error tooltip over the sheet */}
      <div className="absolute left-[1620px] top-[619px] h-[157px] w-[337px] bg-white shadow-[0_3px_14px_rgba(0,0,0,0.28)] pl-[22px] pr-[22px] pt-[25px] font-['Noto_Sans',sans-serif] text-[#555]">
        <div className="text-[13px] leading-[18px] font-medium text-[#444]">Error in Value</div>
        <div className="mt-[11px] text-[13px] leading-[20px]">
          A value used in the formula is of the wrong
          <br />
          data type.
        </div>
        <div className="mt-[11px] border-t border-[#e6e6e6] pt-[12px] flex items-center gap-[9px]">
          <HelpCircle size={18} strokeWidth={1} />
          <svg width="20" height="20" viewBox="0 0 20 20" fill="none">
            <path d="M8 2L2 16h12z" stroke="#666" />
            <path d="M12 12l6 6M18 12l-6 6" stroke="#e2435f" />
          </svg>
        </div>
      </div>

      {/* mouse cursor */}
      <svg className="absolute left-[1619px] top-[548px]" width="16" height="24" viewBox="0 0 16 24">
        <path d="M1 1v18l4-4 3 7 3-1-3-7h6z" fill="#fff" stroke="#222" strokeWidth="1" />
      </svg>

      {/* drag handle on the selected cell */}
      <span className="absolute left-[1026px] top-[402px] size-[5px] bg-[#1f6b45] border border-white" />

      {/* quick analysis badge */}
      <svg className="absolute left-[2170px] top-[1333px]" width="22" height="13" viewBox="0 0 22 13">
        <rect x="1" y="1" width="16" height="11" fill="#fcba27" stroke="#444" />
        <path d="M7 1v11M11 1v11" stroke="#777" />
        <rect x="13" y="3" width="8" height="7" fill="#fff" stroke="#ddd" />
        <rect x="15" y="5.5" width="4" height="2" fill="#334" />
      </svg>
    </div>
  );
}
